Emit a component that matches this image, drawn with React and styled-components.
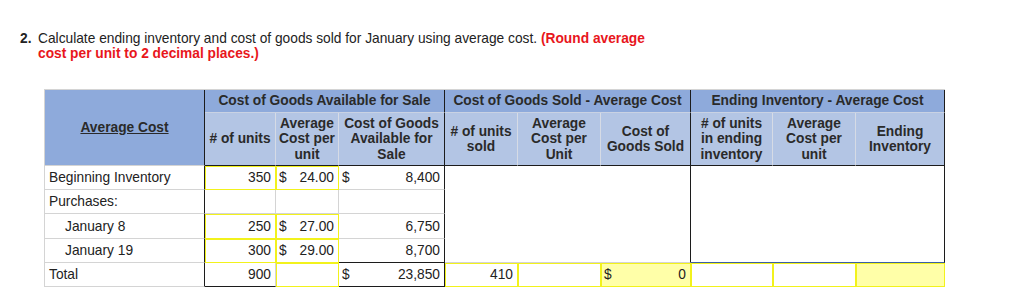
import React from 'react';
import styled, { createGlobalStyle } from 'styled-components';

const GRID = '#d4d4d4';
const DARK = '#1c1c1c';
const HEAD_LINE = '#c9d2e3';
const SUB_LINE = '#d6dbe5';
const BLUE = '#3a5fa3';
const YELLOW = '#f2f21c';

const GlobalStyle = createGlobalStyle`
  body {
    margin: 0;
    background: #fff;
    font-family: "Liberation Sans", Arial, Helvetica, sans-serif;
    color: #222;
  }
`;

const Page = styled.div`
  padding: 31px 0 0 20px;
`;

const Question = styled.div`
  display: flex;
  font-size: 13.75px;
  line-height: 15px;
  color: #222;
`;

const Num = styled.span`
  width: 18px;
  font-weight: bold;
`;

const Hint = styled.span`
  color: #e8161c;
  font-weight: bold;
`;

const Sheet = styled.div`
  display: grid;
  grid-template-columns: 160px 71px 63px 106px 73px 83px 90px 82px 83px 89px;
  grid-template-rows: 23px 53px 24px 24px 25px 24px 24px;
  width: max-content;
  margin: 28px 0 0 24px;
  border-top: 1px solid ${GRID};
  border-left: 1px solid ${GRID};
  font-size: 13.75px;
`;

const Cell = styled.div`
  grid-column: span ${p => p.$cols || 1};
  grid-row: span ${p => p.$rows || 1};
  box-sizing: border-box;
  display: flex;
  align-items: center;
  justify-content: ${p => p.$align || 'flex-start'};
  padding: 0 ${p => (p.$indent ? '20px' : '4px')};
  border-right: 1px solid ${p => p.$r || GRID};
  border-bottom: 1px solid ${p => p.$b || GRID};
  background: ${p => p.$bg || '#fff'};
  outline: ${p => (p.$input ? `1px solid ${YELLOW}` : 'none')};
  outline-offset: -1px;
  color: #222;
  white-space: nowrap;
`;

const Money = styled(Cell)`
  justify-content: space-between;
  padding: 0 4px 0 3px;
`;

const Head = styled.div`
  grid-column: span ${p => p.$cols || 1};
  grid-row: span ${p => p.$rows || 1};
  box-sizing: border-box;
  display: flex;
  align-items: center;
  justify-content: center;
  text-align: center;
  font-weight: bold;
  line-height: 15.5px;
  color: #2a2a2a;
  white-space: nowrap;
  background: ${p => (p.$sub ? '#b3c5e4' : '#8eaadb')};
  border-right: 1px solid ${p => p.$r || SUB_LINE};
  border-bottom: 1px solid ${p => p.$b || DARK};
`;

const Underlined = styled.span`
  text-decoration: underline;
`;

const rows = [
  { label: 'Beginning Inventory', units: '350', cost: '24.00', total: '8,400', dollar: true },
  { label: 'Purchases:', empty: true },
  { label: 'January 8', units: '250', cost: '27.00', total: '6,750', indent: true },
  { label: 'January 19', units: '300', cost: '29.00', total: '8,700', indent: true, last: true },
];

const App = () => (
  <Page>
    <GlobalStyle />
    <Question>
      <Num>2.</Num>
      <div>
        Calculate ending inventory and cost of goods sold for January using average cost.{' '}
        <Hint>(Round average</Hint>
        <br />
        <Hint>cost per unit to 2 decimal places.)</Hint>
      </div>
    </Question>

    <Sheet>
      <Head $rows={2} $r={DARK} $b={GRID}><Underlined>Average Cost</Underlined></Head>
      <Head $cols={3} $r={DARK} $b={HEAD_LINE}>Cost of Goods Available for Sale</Head>
      <Head $cols={3} $r={DARK} $b={HEAD_LINE}>Cost of Goods Sold - Average Cost</Head>
      <Head $cols={3} $r={DARK} $b={HEAD_LINE}>Ending Inventory - Average Cost</Head>

      <Head $sub># of units</Head>
      <Head $sub>Average<br />Cost per<br />unit</Head>
      <Head $sub $r={DARK}>Cost of Goods<br />Available for<br />Sale</Head>
      <Head $sub># of units<br />sold</Head>
      <Head $sub>Average<br />Cost per<br />Unit</Head>
      <Head $sub $r={DARK}>Cost of<br />Goods Sold</Head>
      <Head $sub># of units<br />in ending<br />inventory</Head>
      <Head $sub>Average<br />Cost per<br />unit</Head>
      <Head $sub $r={DARK}>Ending<br />Inventory</Head>

      {rows.map((row, i) => (
        <React.Fragment key={row.label}>
          <Cell $r={DARK} $indent={row.indent}>{row.label}</Cell>
          {row.empty ? (
            <>
              <Cell />
              <Cell />
              <Cell $r={DARK} />
            </>
          ) : (
            <>
              <Cell $input $align="flex-end" $b={row.last ? DARK : GRID}>{row.units}</Cell>
              <Money $input $b={row.last ? DARK : GRID}>
                <span>$</span>
                <span>{row.cost}</span>
              </Money>
              <Money $r={DARK} $b={row.last ? DARK : GRID}>
                <span>{row.dollar ? '$' : ''}</span>
                <span>{row.total}</span>
              </Money>
            </>
          )}
          {i === 0 && (
            <>
              <Cell $cols={3} $rows={4} $r={DARK} $b={GRID} />
              <Cell $cols={3} $rows={4} $r={DARK} $b={BLUE} />
            </>
          )}
        </React.Fragment>
      ))}

      <Cell $r={DARK}>Total</Cell>
      <Cell $align="flex-end" $b={DARK}>900</Cell>
      <Cell $input $b={DARK} />
      <Money $r={DARK} $b={DARK}>
        <span>$</span>
        <span>23,850</span>
      </Money>
      <Cell $input $align="flex-end">410</Cell>
      <Cell $input />
      <Money $input $bg="#ffffa8" $r={BLUE}>
        <span>$</span>
        <span>0</span>
      </Money>
      <Cell $input />
      <Cell $input />
      <Cell $input $bg="#ffffa8" $r={DARK} />
    </Sheet>
  </Page>
);

export default App;
